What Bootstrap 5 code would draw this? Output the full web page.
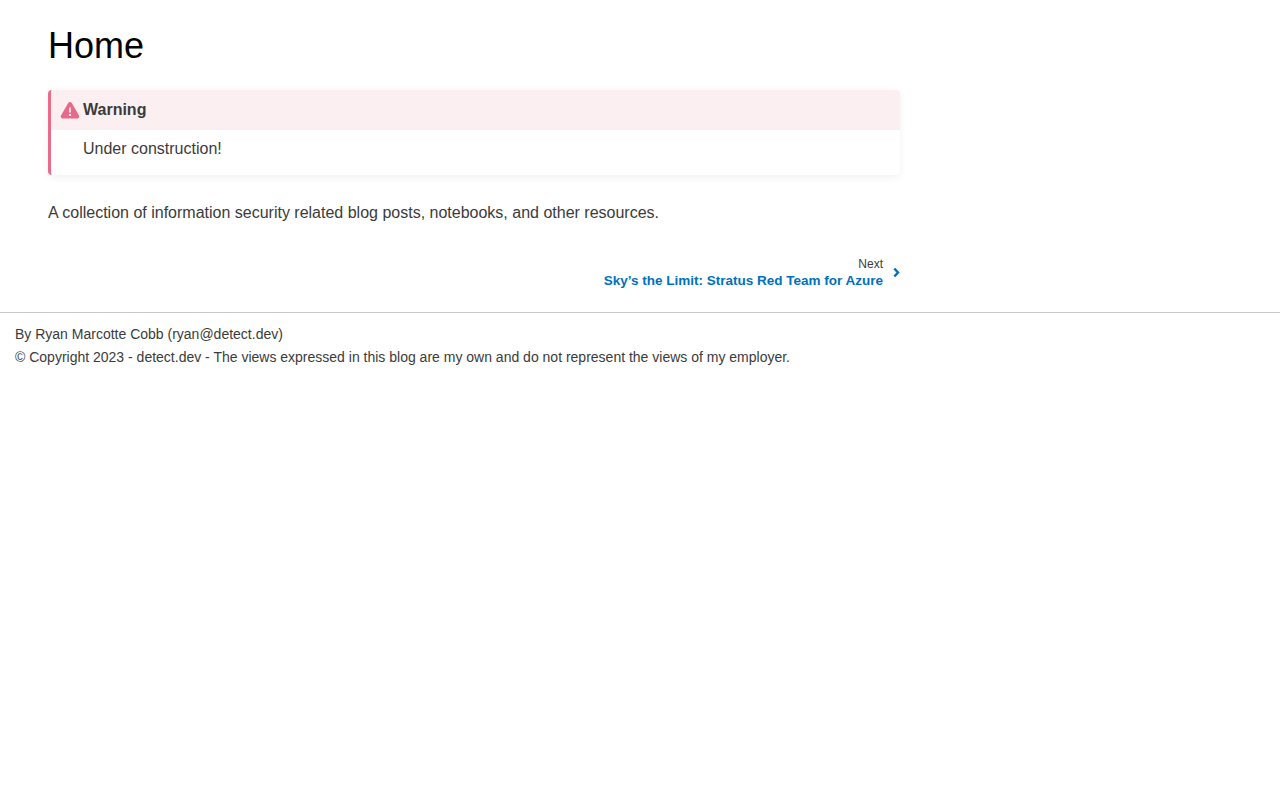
<!DOCTYPE html>
<html lang="en">
<head>
<meta charset="utf-8">
<title>Home</title>
<link href="https://cdn.jsdelivr.net/npm/bootstrap@5.3.0/dist/css/bootstrap.min.css" rel="stylesheet">
<style>
body { font-family: "Liberation Sans", Arial, sans-serif; color: #3b3b3b; font-size: 16px; line-height: 1.5; background: #fff; }
.page-main { padding: 0 48px; }
.page-inner { width: 852px; }
.page-title { font-family: "Liberation Sans", sans-serif; font-size: 36px; font-weight: 400; color: #000; line-height: 45px; margin: 23px 0 22px; }
.warn-box { border-left: 3px solid #ea6a8a; border-radius: 4px; box-shadow: 0 2px 8px rgba(0,0,0,.06); margin-bottom: 26px; overflow: hidden; }
.warn-head { background: #fceff2; height: 40px; padding-left: 9px; font-weight: 700; gap: 3px; }
.warn-head svg { width: 20px; height: 20px; fill: #e86a8a; }
.warn-body { padding: 0 0 16px 32px; height: 45px; line-height: 38px; }
.intro { margin: 0 0 31px; line-height: 24px; }
.next-link { text-decoration: none; color: #0071bc; gap: 10px; }
.next-small { font-size: 12px; color: #3b3b3b; line-height: 16px; text-align: right; }
.next-title { font-size: 13.5px; font-weight: 700; line-height: 17px; color: #0071bc; }
.next-link svg { width: 7px; height: 11px; }
.foot { border-top: 1px solid #c8c8c8; margin-top: 23px; padding: 10px 15px; font-size: 14px; line-height: 23px; }
</style>
</head>
<body>
<main class="page-main">
  <div class="page-inner">
    <h1 class="page-title">Home</h1>
    <div class="warn-box">
      <div class="warn-head d-flex align-items-center">
        <svg viewBox="0 0 24 24"><path d="M12 2.500c-1 0-1.800.5-2.300 1.300L1.200 18.500c-1 1.800.2 3.700 2.200 3.700h17.200c2 0 3.200-1.900 2.200-3.700L14.300 3.800c-.5-.8-1.300-1.300-2.300-1.300zM11 9h2v6h-2zM12 16.500a1.400 1.400 0 1 1 0 2.800 1.400 1.400 0 0 1 0-2.800z" fill-rule="evenodd"/></svg>
        <span>Warning</span>
      </div>
      <div class="warn-body">Under construction!</div>
    </div>
    <p class="intro">A collection of information security related blog posts, notebooks, and other resources.</p>
    <div class="d-flex justify-content-end">
      <a class="next-link d-flex align-items-center" href="#">
        <span>
          <span class="next-small d-block">Next</span>
          <span class="next-title d-block">Sky’s the Limit: Stratus Red Team for Azure</span>
        </span>
        <svg viewBox="0 0 7 11"><path d="M1.300 1.500 5 5.500 1.300 9.500" fill="none" stroke="#0071bc" stroke-width="2.400"/></svg>
      </a>
    </div>
  </div>
</main>
<footer class="foot">
  <div>By Ryan Marcotte Cobb (ryan@detect.dev)</div>
  <div>© Copyright 2023 - detect.dev - The views expressed in this blog are my own and do not represent the views of my employer.</div>
</footer>
<script src="https://cdn.jsdelivr.net/npm/bootstrap@5.3.0/dist/js/bootstrap.bundle.min.js"></script>
</body>
</html>
